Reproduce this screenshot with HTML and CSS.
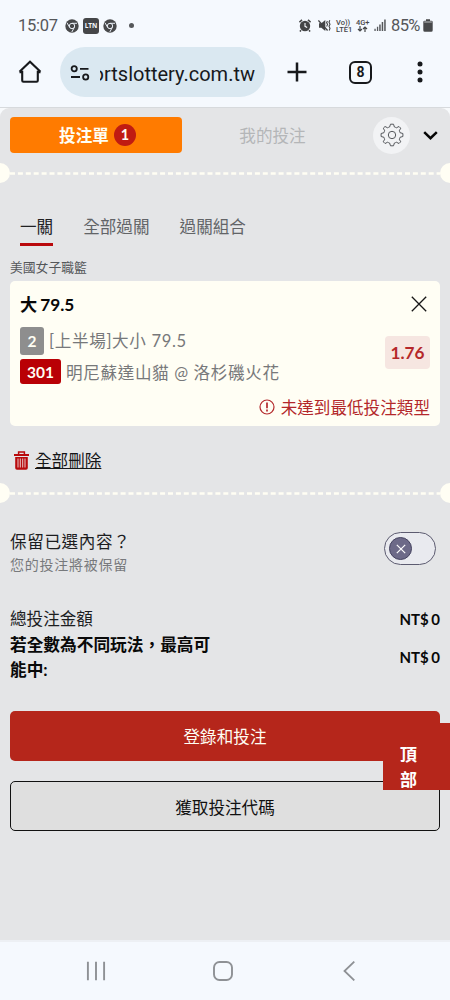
FILE: index.html
```
<!DOCTYPE html>
<html lang="zh-Hant">
<head>
<meta charset="utf-8">
<title>投注單</title>
<link rel="stylesheet" href="styles.css">
</head>
<body>
<div class="phone">
  <header class="status">
    <span class="clock">15:07</span>
    <svg class="chrome" width="14" height="14" viewBox="0 0 14 14"><circle cx="7" cy="7" r="6.7" fill="#48494b"/><g fill="none" stroke="#e9eef5" stroke-width="1"><circle cx="7" cy="7" r="2.7"/><path d="M7 4.3H12M4.7 8.4L2 3.8M9.3 8.4L6.8 13"/></g></svg>
    <span class="ltn">LTN</span>
    <svg class="chrome" width="14" height="14" viewBox="0 0 14 14"><circle cx="7" cy="7" r="6.7" fill="#48494b"/><g fill="none" stroke="#e9eef5" stroke-width="1"><circle cx="7" cy="7" r="2.7"/><path d="M7 4.3H12M4.7 8.4L2 3.8M9.3 8.4L6.8 13"/></g></svg>
    <span class="dot"></span>
    <div class="signals">
      <svg width="12" height="13" viewBox="0 0 12 13"><circle cx="6" cy="7" r="5.2" fill="#444547"/><path d="M.4 3.2L3 .8M11.6 3.2L9 .8M2 11.3L.9 12.5M10 11.3l1.1 1.2" stroke="#444547" stroke-width="1.6"/><path d="M6 4v3.3l2.2 1.2" fill="none" stroke="#f6f9fe" stroke-width="1.1"/></svg>
      <svg class="mute" width="13" height="13" viewBox="0 0 13 13"><path d="M1 4.3h2.4L7.3 1v11L3.4 8.8H1z" fill="#444547"/><path d="M.4 1.5l9.2 10" stroke="#444547" stroke-width="1.3"/><path d="M9.4 2l-.8 1.8 1 1.6-1 2M11.8 1.2l-.8 2 1 2-1 2 1 2-.8 2.3" fill="none" stroke="#444547" stroke-width="1.1"/></svg>
      <div class="net volte"><span>Vo))</span><span>LTE1</span></div>
      <div class="net fourg"><span>4G+</span><svg width="11" height="6" viewBox="0 0 11 6"><path d="M3 0v5M1 3l2 2 2-2M8 6V1M6 3l2-2 2 2" fill="none" stroke="#444547" stroke-width="1.2"/></svg></div>
      <svg class="bars" width="12" height="13" viewBox="0 0 12 13" fill="#55575a"><path d="M.4 9.8h1.3V12H.4zM2.9 7.8h1.3V12H2.9zM5.2 5.5h1.5V12H5.2zM7.7 3h1.5v9H7.7zM10.2.5h1.5V12h-1.5z"/></svg>
      <span class="percent">85%</span>
      <svg class="battery" width="10" height="13" viewBox="0 0 10 13"><path d="M3 .2h4v1.5h1.3Q9.700 1.700 9.700 3v8.200q0 1.500-1.500 1.500H1.800Q.3 12.700.3 11.200V3q0-1.300 1.400-1.300H3z" fill="#47484a"/><rect x="1.200" y="2.200" width="7.600" height="1.600" fill="#919396"/></svg>
    </div>
  </header>

  <div class="toolbar">
    <svg class="home" width="24" height="24" viewBox="0 0 24 24"><path d="M1.500 11.800L12 1.800l10.500 10M1.500 12.300h3M19.500 12.300h3M4.200 10.800V20.500q0 1.200 1.200 1.200h13.200q1.200 0 1.200-1.200V10.800" fill="none" stroke="#17191c" stroke-width="2.100"/></svg>
    <div class="address">
      <svg width="20" height="16" viewBox="0 0 20 16"><g fill="none" stroke="#17191c" stroke-width="1.800"><circle cx="4.200" cy="3.800" r="2.600"/><path d="M10 3.800h8.500M1 12h9"/><circle cx="15.700" cy="12" r="2.600"/></g></svg>
      <div class="url"><span>ortslottery.com.tw</span></div>
    </div>
    <svg class="plus" width="20" height="20" viewBox="0 0 20 20"><path d="M10 .5v19M.5 10h19" stroke="#17191c" stroke-width="2.500"/></svg>
    <span class="count">8</span>
    <svg class="more" width="6" height="22" viewBox="0 0 6 22" fill="#17191c"><circle cx="3" cy="3" r="2.500"/><circle cx="3" cy="11" r="2.500"/><circle cx="3" cy="19" r="2.500"/></svg>
  </div>

  <div class="page">
    <main class="slip">
      <div class="slip-head">
        <div class="slip-tab">投注單<span class="badge">1</span></div>
        <div class="my-bets">我的投注</div>
        <div class="gear"><svg width="24" height="24" viewBox="-12 -12 24 24"><path fill="none" stroke="#55585c" stroke-width="1" stroke-linejoin="round" d="M-1.500-10.800H1.500L2.400-8Q3.500-7.700 4.300-7.200L7-8.500 8.700-6.800 7.300-4.200Q7.800-3.300 8-2.300L10.900-1.500V1.500L8 2.300Q7.800 3.300 7.300 4.200L8.700 6.800 7 8.500 4.300 7.200Q3.500 7.700 2.400 8L1.500 10.800H-1.500L-2.400 8Q-3.500 7.700-4.300 7.200L-7 8.500-8.700 6.800-7.300 4.200Q-7.800 3.300-8 2.300L-10.900 1.500V-1.500L-8-2.300Q-7.800-3.300-7.300-4.200L-8.700-6.800-7-8.500-4.300-7.200Q-3.500-7.700-2.400-8Z"/><circle r="3.700" fill="none" stroke="#55585c"/></svg></div>
        <svg class="chevron" width="15" height="9" viewBox="0 0 15 9"><path d="M1.200 1.200l6.300 6 6.300-6" fill="none" stroke="#050505" stroke-width="2.500"/></svg>
      </div>

      <div class="tear"><i></i><svg width="430" height="3"><path d="M0 1.500H430" stroke="#fffef4" stroke-width="2.400" stroke-dasharray="5 2.900"/></svg><i></i></div>

      <nav class="modes"><span class="active">一關</span><span>全部過關</span><span>過關組合</span></nav>
      <div class="league">美國女子職籃</div>

      <section class="card">
        <div class="card-title"><b>大<span class="line">79.5</span></b><svg width="16" height="16" viewBox="0 0 16 16"><path d="M.8.8l14.400 14.400M15.200.8L.8 15.200" stroke="#161616" stroke-width="1.300"/></svg></div>
        <div class="selection">
          <div class="details">
            <div class="detail"><b class="tag grey">2</b><span>[上半場]大小 79.5</span></div>
            <div class="detail match"><b class="tag red">301</b><span>明尼蘇達山貓 @ 洛杉磯火花</span></div>
          </div>
          <div class="odds">1.76</div>
        </div>
        <div class="warning"><svg width="16" height="16" viewBox="0 0 16 16"><circle cx="8" cy="8" r="7" fill="none" stroke="#b3282b" stroke-width="1.200"/><path d="M8 3.600v5.600M8 10.600v1.800" stroke="#b3282b" stroke-width="1.700"/></svg>未達到最低投注類型</div>
      </section>

      <div class="delete"><svg width="15" height="19" viewBox="0 0 15 19"><path d="M4.600 3V1h5.800v2" fill="none" stroke="#b80a0c" stroke-width="1.500"/><path d="M0 2.900h15v2.200H0zM1.200 6h12.600v11q0 1.800-1.800 1.800H3q-1.800 0-1.800-1.800z" fill="#b80a0c"/><path d="M4 7.500v9M6.300 7.500v9M8.700 7.500v9M11 7.500v9" stroke="#e8c8c9" stroke-width="1"/></svg><span>全部刪除</span></div>

      <div class="tear second"><i></i><svg width="430" height="3"><path d="M0 1.500H430" stroke="#fffef4" stroke-width="2.400" stroke-dasharray="5 2.900"/></svg><i></i></div>

      <div class="keep">
        <div><div class="question">保留已選內容？</div><div class="hint">您的投注將被保留</div></div>
        <div class="toggle"><span><svg width="10" height="10" viewBox="0 0 10 10"><path d="M.8.8l8.400 8.400M9.200.8L.8 9.200" stroke="#fff" stroke-width="1.200"/></svg></span></div>
      </div>

      <div class="total"><span>總投注金額</span><b>NT$ 0</b></div>
      <div class="total win"><strong>若全數為不同玩法，最高可能中:</strong><b>NT$ 0</b></div>

      <div class="button primary">登錄和投注</div>
      <div class="button outline">獲取投注代碼</div>
    </main>
    <div class="to-top">頂<br>部</div>
  </div>

  <footer class="softkeys">
    <svg width="20" height="20" viewBox="0 0 20 20"><path d="M1.900.7v18.600M10 .7v18.600M18.100.7v18.600" stroke="#8e9195" stroke-width="1.900"/></svg>
    <svg width="20" height="20" viewBox="0 0 20 20"><rect x="1" y="1" width="18" height="18" rx="5.500" fill="none" stroke="#8e9195" stroke-width="1.900"/></svg>
    <svg width="20" height="20" viewBox="0 0 20 20"><path d="M15.300.6L5.500 10l9.800 9.400" fill="none" stroke="#8e9195" stroke-width="1.800"/></svg>
  </footer>
</div>
</body>
</html>
```
FILE: styles.css
```
* { box-sizing: border-box; }
body { margin: 0; background: #f5f9fe; font-family: Lato, "Noto Sans CJK TC", sans-serif; }
svg { display: block; flex: none; }
.phone { width: 450px; height: 1000px; display: flex; flex-direction: column; overflow: hidden; font-size: 16.6px; }

.status { height: 47px; padding: 4px 17px 0 18px; display: flex; align-items: center; color: #55575a; font-family: Roboto, sans-serif; }
.clock { width: 40px; font-size: 16.5px; letter-spacing: -.25px; margin-right: 7px; }
.ltn { width: 16px; height: 16px; margin: 0 4px; border-radius: 3px; background: #454648; color: #f5f9fe; font: bold 6.5px/16px "Open Sans", sans-serif; text-align: center; }
.dot { width: 5px; height: 5px; margin-left: 12px; border-radius: 50%; background: #55575a; }
.signals { margin-left: auto; display: flex; align-items: center; }
.mute { margin-left: 7px; }
.net { display: flex; flex-direction: column; font: 500 7.5px/7px Roboto, sans-serif; color: #444547; }
.net span { display: block; height: 7px; white-space: nowrap; }
.volte { width: 17px; margin-left: 5px; }
.fourg { width: 14px; margin-left: 3px; }
.fourg svg { margin-left: 1px; }
.bars { margin-left: 4px; }
.percent { width: 32px; margin-left: 5px; font-size: 16.5px; letter-spacing: -.6px; white-space: nowrap; }

.toolbar { height: 60px; display: flex; align-items: flex-start; }
.home { margin: 13px 0 0 18px; }
.address { width: 205px; height: 50px; margin-left: 18px; padding: 1px 9px 0 10px; border-radius: 25px; background: #dae8f1; display: flex; align-items: center; }
.url { width: 155px; margin-left: 10px; overflow: hidden; display: flex; justify-content: flex-end; font: 20px/28px Roboto, sans-serif; color: #17191c; white-space: nowrap; padding-top: 2px; }
.plus { margin: 15px 0 0 22px; }
.count { width: 23px; height: 23px; margin: 14px 0 0 42px; border: 2px solid #17191c; border-radius: 6px; font: bold 14px/19px Roboto, sans-serif; text-align: center; color: #17191c; }
.more { margin: 14px 0 0 45px; }

.page { position: relative; height: 833px; background: #f8fafc; border-top: 1px solid #d7dadd; }
.slip { height: 832px; padding-top: 9px; border-radius: 9px 9px 0 0; background: #e4e5e7; }
.slip-head { height: 36px; padding-left: 10px; display: flex; align-items: center; }
.slip-tab { width: 172px; height: 36px; padding-left: 3px; border-radius: 4px; background: #ff7b00; color: #fffef4; font-weight: bold; display: flex; align-items: center; justify-content: center; }
.badge { width: 22px; height: 22px; margin-left: 5px; border-radius: 50%; background: #c01b12; font-size: 14.5px; line-height: 22px; text-align: center; }
.my-bets { width: 181px; text-align: center; color: #b4b6b8; }
.gear { width: 37px; height: 37px; margin-left: 10px; border-radius: 50%; background: #f2f3f5; display: flex; align-items: center; justify-content: center; }
.chevron { margin-left: 13px; }
.tear { height: 20px; margin: 10px -10px 0; display: flex; align-items: center; }
.tear i { width: 20px; height: 20px; border-radius: 50%; background: #fffef4; flex: none; }
.tear svg { margin-top: 1px; }
.modes { height: 34px; margin: 29px 20px 0; line-height: 30px; display: flex; gap: 30px; color: #626467; }
.active { height: 34px; color: #202123; border-bottom: 3px solid #b9090c; }
.league { height: 20px; margin: 11px 10px 4px; font-size: 12.8px; line-height: 20px; color: #55575a; }

.card { height: 145px; margin: 0 10px; padding: 9px 10px 10px; border-radius: 5px; background: #fffef4; }
.card-title { height: 27px; display: flex; align-items: center; justify-content: space-between; font-size: 17.2px; color: #080808; }
.card-title b { font-weight: bold; }
.card-title svg { margin-right: 3px; }
.line { margin-left: 3px; }
.selection { height: 67px; margin-top: 10px; display: flex; }
.details { flex: 1; color: #77787a; letter-spacing: .63px; }
.detail { height: 27px; display: flex; line-height: 28px; white-space: nowrap; }
.detail span { margin-left: 5px; }
.tag { color: #fffef4; border-radius: 3px; text-align: center; letter-spacing: 0; font-size: 15.5px; }
.grey { width: 24px; height: 28px; background: #8e8e8e; }
.match { margin-top: 5px; line-height: 29px; }
.red { width: 41px; height: 25px; line-height: 27px; background: #b90005; }
.odds { width: 45px; height: 33px; margin-top: 9px; border-radius: 4px; background: #f6e6e1; color: #b5282a; font-weight: bold; font-size: 17.2px; line-height: 34px; text-align: center; }
.warning { height: 24px; margin-top: 1px; display: flex; align-items: center; justify-content: flex-end; gap: 6px; color: #b3282b; }
.delete { height: 28px; margin: 20px 0 0 14px; display: flex; align-items: center; gap: 6px; color: #151618; text-decoration: underline; }
.second { margin-top: 9px; }

.keep { height: 50px; margin: 26px 14px 0 10px; display: flex; justify-content: space-between; }
.question { line-height: 26px; letter-spacing: .6px; color: #1c1d1f; }
.hint { font-size: 14px; line-height: 20px; letter-spacing: .75px; color: #77797c; }
.toggle { width: 52px; height: 33px; margin-top: 3px; padding: 4px; border: 1px solid #5c5b70; border-radius: 17px; background: #e9eaef; }
.toggle span { width: 23px; height: 23px; border: 1px solid #454360; border-radius: 50%; background: #6d6a88; display: flex; align-items: center; justify-content: center; }
.total { height: 25px; margin: 28px 10px 0; display: flex; align-items: center; justify-content: space-between; line-height: 25px; color: #1c1d1f; }
.total b { font-size: 15px; color: #090909; word-spacing: -1px; }
.total strong { width: 205px; padding-top: 1px; font-size: 16.7px; }
.win { height: 50px; margin-top: 0; color: #090909; }
.button { height: 50px; margin: 0 10px; border-radius: 5px; text-align: center; }
.primary { margin-top: 29px; background: #b5261b; color: #fffef4; line-height: 53px; }
.outline { margin-top: 20px; border: 1px solid #111; background: #dfdfdf; color: #111; line-height: 52px; }
.to-top { position: absolute; right: 0; top: 615px; width: 67px; height: 67px; padding: 19px 0 0 17px; background: #b5261b; color: #fff; font-weight: bold; font-size: 17px; line-height: 25px; }
.softkeys { height: 60px; border-top: 2px solid #edf0f4; background: #f5f9fe; padding: 0 91px 0 86px; display: flex; align-items: center; justify-content: space-between; }
```
